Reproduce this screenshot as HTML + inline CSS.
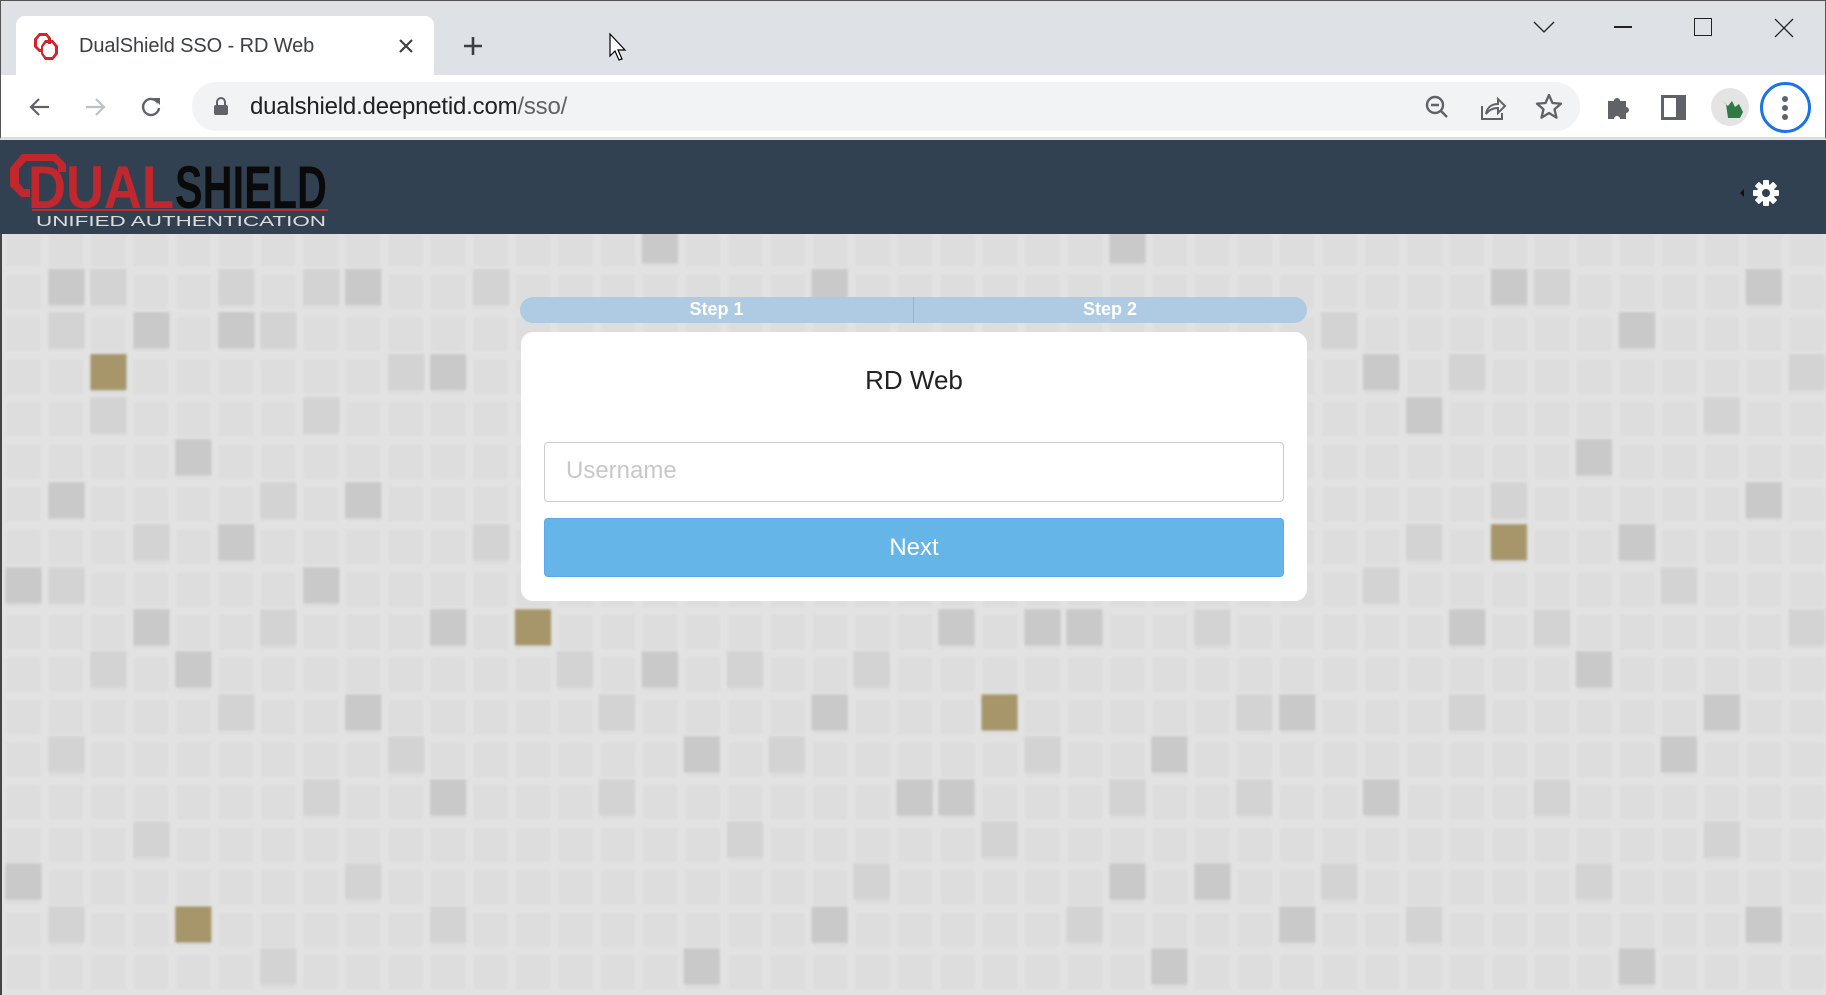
<!DOCTYPE html>
<html><head><meta charset="utf-8"><style>
*{margin:0;padding:0;box-sizing:border-box}
body{width:1826px;height:995px;overflow:hidden;position:relative;font-family:"Liberation Sans",Arial,sans-serif;background:#e1e1e1}
.abs{position:absolute}
#tabs{left:0;top:0;width:1826px;height:75px;background:#dee1e6;border-top:1px solid #555;border-left:1px solid #555;border-right:1px solid #555}
#tab{left:16px;top:16px;width:418px;height:60px;background:#fff;border-radius:9px 9px 0 0}
#toolbar{left:0;top:75px;width:1826px;height:64px;background:#fff;border-bottom:2px solid #dadce0;border-left:1px solid #555;border-right:1px solid #555}
#omni{left:192px;top:82px;width:1388px;height:49px;background:#f1f3f4;border-radius:25px}
#hdr{left:0;top:140px;width:1826px;height:94px;background:#314151}
#bg{left:0;top:234px;width:1826px;height:761px;border-left:2px solid #444}
</style></head><body>
<div id="tabs" class="abs"></div>
<div id="tab" class="abs"></div>
<svg class="abs" style="left:34px;top:31px" width="24" height="30" viewBox="0 0 24 30"><path d="M5 2h8l4 5v6h-3V8l-2-3H6L3 9v6l3 3h2v3H5L0 16V8z" fill="#d3242b"/><path d="M11 9h8l5 6v8l-5 6h-8l-4-6v-8z M12 12l-3 4v6l3 4h6l3-4v-6l-3-4z" fill="#d3242b"/></svg>
<div class="abs" style="left:79px;top:35px;font-size:20px;color:#3c4043;letter-spacing:-0.1px">DualShield SSO - RD Web</div>
<svg class="abs" style="left:398px;top:38px" width="16" height="16"><path d="M2 2L14 14M14 2L2 14" stroke="#3c4043" stroke-width="2.2"/></svg>
<svg class="abs" style="left:462px;top:35px" width="22" height="22"><path d="M11 2v18M2 11h18" stroke="#3c4043" stroke-width="2.6"/></svg>
<svg class="abs" style="left:608px;top:32px" width="20" height="30"><path d="M2 2v22l5-5 4 9 3-1-4-9h7z" fill="#fff" stroke="#000" stroke-width="1.2"/></svg>
<svg class="abs" style="left:1532px;top:18px" width="24" height="16"><path d="M2 4l10 10 10-10" stroke="#222" stroke-width="1.3" fill="none"/></svg>
<div class="abs" style="left:1614px;top:26px;width:18px;height:1.5px;background:#222"></div>
<div class="abs" style="left:1694px;top:18px;width:18px;height:18px;border:1.5px solid #222"></div>
<svg class="abs" style="left:1774px;top:18px" width="20" height="20"><path d="M1 1L19 19M19 1L1 19" stroke="#222" stroke-width="1.3"/></svg>
<div id="toolbar" class="abs"></div>
<div id="omni" class="abs"></div>
<svg class="abs" style="left:28px;top:95px" width="24" height="24"><path d="M21 12H4M11 4l-8 8 8 8" stroke="#5f6368" stroke-width="2.2" fill="none"/></svg>
<svg class="abs" style="left:83px;top:95px" width="24" height="24"><path d="M3 12h17M13 4l8 8-8 8" stroke="#bdc1c6" stroke-width="2.2" fill="none"/></svg>
<svg class="abs" style="left:139px;top:95px" width="24" height="24"><path d="M19 8A8 8 0 1 0 20 13" stroke="#5f6368" stroke-width="2.4" fill="none"/><path d="M14 3h7v7z" fill="#5f6368"/></svg>
<svg class="abs" style="left:213px;top:96px" width="16" height="20"><path d="M4 9V6a4 4 0 0 1 8 0v3" stroke="#5f6368" stroke-width="2" fill="none"/><rect x="1" y="9" width="14" height="10" rx="2" fill="#5f6368"/></svg>
<div class="abs" style="left:250px;top:93px;font-size:24px;color:#202124;letter-spacing:-0.2px">dualshield.deepnetid.com<span style="color:#5f6368">/sso/</span></div>
<svg class="abs" style="left:1424px;top:94px" width="28" height="28"><circle cx="11" cy="11" r="8" stroke="#5f6368" stroke-width="2.4" fill="none"/><path d="M7 11h8M17 17l6 6" stroke="#5f6368" stroke-width="2.4"/></svg>
<svg class="abs" style="left:1479px;top:94px" width="28" height="28"><path d="M3 12v13h20v-6" stroke="#5f6368" stroke-width="2" fill="none"/><path d="M7 20c1-7 6-10 12-10V5l7 7-7 7v-5c-5 0-9 2-12 6z" stroke="#5f6368" stroke-width="2" fill="none"/></svg>
<svg class="abs" style="left:1535px;top:93px" width="28" height="28"><path d="M14 2l3.5 8 8.5.7-6.5 5.6 2 8.4L14 20l-7.5 4.7 2-8.4L2 10.7l8.5-.7z" stroke="#5f6368" stroke-width="2.3" fill="none" stroke-linejoin="round"/></svg>
<svg class="abs" style="left:1605px;top:93px" width="28" height="28"><path d="M3 8h6a3 3 0 1 1 6 0h6v6a3 3 0 1 1 0 6v6h-6a3 3 0 1 0-6 0H3z" fill="#5f6368"/></svg>
<svg class="abs" style="left:1661px;top:95px" width="26" height="26"><rect x="1.5" y="1.5" width="22" height="22" fill="none" stroke="#5f6368" stroke-width="3"/><rect x="15" y="2" width="8" height="22" fill="#5f6368"/></svg>
<div class="abs" style="left:1711px;top:88px;width:38px;height:38px;border-radius:50%;background:#e4e4e4;overflow:hidden"><svg width="38" height="38"><path d="M10 12l5 4 2 14h12l3-6-4-8-4 3-3-6-4 5z" fill="#2f7a45"/></svg></div>
<div class="abs" style="left:1760px;top:82px;width:51px;height:51px;border-radius:50%;border:3px solid #1a73e8"></div>
<div class="abs" style="left:1782px;top:96px;width:6px;height:6px;border-radius:50%;background:#5f6368;box-shadow:0 9px 0 #5f6368,0 18px 0 #5f6368"></div>
<div id="hdr" class="abs"></div>
<svg class="abs" style="left:10px;top:148px" width="330" height="82" viewBox="0 0 330 82">
<path d="M12 6h34l10 10v8h-8v-6l-5-5H16l-7 8v14l5 6h6v8h-9L0 38V20z" fill="#c1272d"/>
<text x="18" y="60" font-family="Liberation Sans" font-weight="bold" font-size="60" fill="#c1272d" textLength="146" lengthAdjust="spacingAndGlyphs">DUAL</text>
<text x="165" y="60" font-family="Liberation Sans" font-weight="bold" font-size="60" fill="#0a0a0a" textLength="152" lengthAdjust="spacingAndGlyphs">SHIELD</text>
<rect x="22" y="61" width="296" height="2" fill="#c1272d"/>
<text x="26" y="78" font-family="Liberation Sans" font-size="15" fill="#dcdcdc" textLength="290" lengthAdjust="spacingAndGlyphs">UNIFIED AUTHENTICATION</text>
</svg>
<svg class="abs" style="left:1738px;top:178px" width="44" height="30" viewBox="0 0 44 30"><path d="M6 11v8l-4-4z" fill="#111"/>
<g transform="translate(28 15)"><circle r="9" fill="#fff"/><g fill="#fff"><rect x="-3" y="-13" width="6" height="26" rx="1"/><rect x="-3" y="-13" width="6" height="26" rx="1" transform="rotate(45)"/><rect x="-3" y="-13" width="6" height="26" rx="1" transform="rotate(90)"/><rect x="-3" y="-13" width="6" height="26" rx="1" transform="rotate(135)"/></g><circle r="4" fill="#314151"/></g></svg>
<svg id="bg" class="abs" viewBox="0 201 1568 653" preserveAspectRatio="none">
<defs><pattern id="p" x="2" y="197.5" width="36.5" height="36.5" patternUnits="userSpaceOnUse"><rect x="0" y="0" width="36.5" height="36.5" fill="#e2e2e2"/><rect x="2" y="2" width="29" height="29" fill="#dddddd"/></pattern>
<filter id="b"><feGaussianBlur stdDeviation="1.2"/></filter></defs>
<rect x="0" y="201" width="1568" height="653" fill="url(#p)" filter="url(#b)"/>
<g fill="#d3d3d3" filter="url(#b)">
<rect x="76" y="231" width="31" height="31"/><rect x="186" y="231" width="31" height="31"/><rect x="259" y="231" width="31" height="31"/><rect x="222" y="268" width="31" height="31"/><rect x="40" y="268" width="31" height="31"/><rect x="76" y="341" width="31" height="31"/><rect x="259" y="341" width="31" height="31"/><rect x="222" y="414" width="31" height="31"/><rect x="113" y="450" width="31" height="31"/><rect x="40" y="487" width="31" height="31"/><rect x="222" y="523" width="31" height="31"/><rect x="76" y="559" width="31" height="31"/><rect x="186" y="596" width="31" height="31"/><rect x="40" y="632" width="31" height="31"/><rect x="259" y="669" width="31" height="31"/><rect x="113" y="705" width="31" height="31"/><rect x="295" y="741" width="31" height="31"/><rect x="40" y="778" width="31" height="31"/><rect x="368" y="778" width="31" height="31"/><rect x="222" y="814" width="31" height="31"/><rect x="477" y="559" width="31" height="31"/><rect x="513" y="596" width="31" height="31"/><rect x="623" y="559" width="31" height="31"/><rect x="659" y="632" width="31" height="31"/><rect x="732" y="559" width="31" height="31"/><rect x="513" y="669" width="31" height="31"/><rect x="623" y="705" width="31" height="31"/><rect x="879" y="632" width="31" height="31"/><rect x="842" y="705" width="31" height="31"/><rect x="732" y="741" width="31" height="31"/><rect x="1061" y="669" width="31" height="31"/><rect x="915" y="778" width="31" height="31"/><rect x="1134" y="741" width="31" height="31"/><rect x="1244" y="596" width="31" height="31"/><rect x="1317" y="669" width="31" height="31"/><rect x="1207" y="778" width="31" height="31"/><rect x="1463" y="705" width="31" height="31"/><rect x="1353" y="741" width="31" height="31"/><rect x="1134" y="268" width="31" height="31"/><rect x="1244" y="304" width="31" height="31"/><rect x="1317" y="231" width="31" height="31"/><rect x="1463" y="341" width="31" height="31"/><rect x="1280" y="414" width="31" height="31"/><rect x="1426" y="487" width="31" height="31"/><rect x="1536" y="523" width="31" height="31"/><rect x="1170" y="487" width="31" height="31"/><rect x="1317" y="523" width="31" height="31"/><rect x="1207" y="450" width="31" height="31"/><rect x="1536" y="304" width="31" height="31"/><rect x="405" y="231" width="31" height="31"/><rect x="332" y="304" width="31" height="31"/><rect x="405" y="450" width="31" height="31"/><rect x="332" y="632" width="31" height="31"/><rect x="1025" y="523" width="31" height="31"/><rect x="1061" y="596" width="31" height="31"/><rect x="952" y="669" width="31" height="31"/></g>
<g fill="#c9c9c9" filter="url(#b)">
<rect x="40" y="231" width="31" height="31"/><rect x="295" y="231" width="31" height="31"/><rect x="113" y="268" width="31" height="31"/><rect x="186" y="268" width="31" height="31"/><rect x="368" y="304" width="31" height="31"/><rect x="149" y="377" width="31" height="31"/><rect x="40" y="414" width="31" height="31"/><rect x="295" y="414" width="31" height="31"/><rect x="186" y="450" width="31" height="31"/><rect x="259" y="487" width="31" height="31"/><rect x="113" y="523" width="31" height="31"/><rect x="368" y="523" width="31" height="31"/><rect x="149" y="559" width="31" height="31"/><rect x="550" y="559" width="31" height="31"/><rect x="295" y="596" width="31" height="31"/><rect x="696" y="596" width="31" height="31"/><rect x="1098" y="596" width="31" height="31"/><rect x="1463" y="596" width="31" height="31"/><rect x="586" y="632" width="31" height="31"/><rect x="988" y="632" width="31" height="31"/><rect x="368" y="669" width="31" height="31"/><rect x="769" y="669" width="31" height="31"/><rect x="805" y="669" width="31" height="31"/><rect x="1170" y="669" width="31" height="31"/><rect x="952" y="741" width="31" height="31"/><rect x="1025" y="741" width="31" height="31"/><rect x="696" y="778" width="31" height="31"/><rect x="1098" y="778" width="31" height="31"/><rect x="1499" y="778" width="31" height="31"/><rect x="586" y="814" width="31" height="31"/><rect x="988" y="814" width="31" height="31"/><rect x="1390" y="814" width="31" height="31"/><rect x="1170" y="304" width="31" height="31"/><rect x="1353" y="377" width="31" height="31"/><rect x="1207" y="341" width="31" height="31"/><rect x="1390" y="450" width="31" height="31"/><rect x="1499" y="414" width="31" height="31"/><rect x="1280" y="231" width="31" height="31"/><rect x="1499" y="231" width="31" height="31"/><rect x="1390" y="268" width="31" height="31"/><rect x="915" y="523" width="31" height="31"/><rect x="805" y="523" width="31" height="31"/><rect x="879" y="523" width="31" height="31"/><rect x="550" y="195" width="31" height="31"/><rect x="952" y="195" width="31" height="31"/><rect x="696" y="231" width="31" height="31"/><rect x="3" y="487" width="31" height="31"/><rect x="3" y="741" width="31" height="31"/><rect x="1353" y="559" width="31" height="31"/><rect x="1426" y="632" width="31" height="31"/><rect x="1244" y="523" width="31" height="31"/></g>
<g fill="#a6966a" filter="url(#b)"><rect x="76" y="304" width="31" height="31"/><rect x="441" y="523" width="31" height="31"/><rect x="842" y="596" width="31" height="31"/><rect x="149" y="778" width="31" height="31"/><rect x="1280" y="450" width="31" height="31"/></g>
</svg>
<div class="abs" style="left:520px;top:297px;width:787px;height:26px;background:#aecbe3;border-radius:13px"></div>
<div class="abs" style="left:913px;top:297px;width:1px;height:26px;background:#98b4cc"></div>
<div class="abs" style="left:520px;top:299px;width:393px;text-align:center;color:#fff;font-weight:bold;font-size:18px">Step 1</div>
<div class="abs" style="left:913px;top:299px;width:394px;text-align:center;color:#fff;font-weight:bold;font-size:18px">Step 2</div>
<div class="abs" style="left:521px;top:332px;width:786px;height:269px;background:#fff;border-radius:12px"></div>
<div class="abs" style="left:521px;top:365px;width:786px;text-align:center;font-size:26px;color:#222">RD Web</div>
<div class="abs" style="left:544px;top:442px;width:740px;height:60px;border:1px solid #ccc;border-radius:4px;background:#fff"></div>
<div class="abs" style="left:566px;top:457px;font-size:24px;color:#c8c8c8">Username</div>
<div class="abs" style="left:544px;top:518px;width:740px;height:59px;background:#66b5e8;border:1px solid #5aa9f0;border-radius:4px;color:#fff;font-size:24px;text-align:center;line-height:57px">Next</div>
</body></html>
